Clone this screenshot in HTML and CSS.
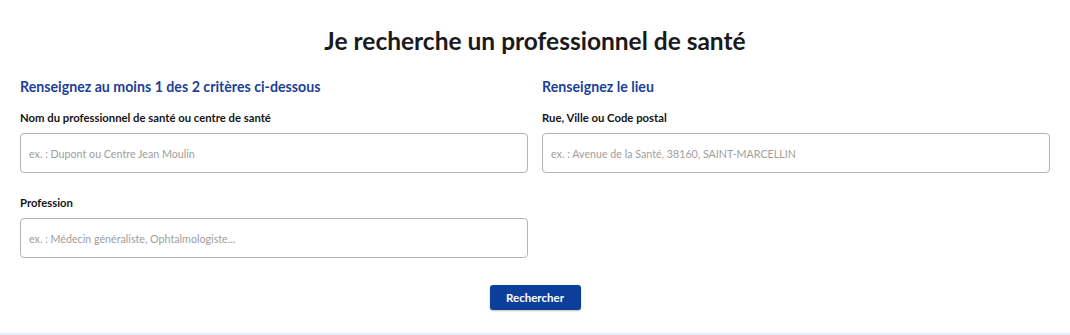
FILE: index.html
```html
<!DOCTYPE html>
<html lang="fr">
<head>
<meta charset="utf-8">
<link rel="stylesheet" href="styles.css">
</head>
<body>
<main class="search">
  <h1 class="title">Je recherche un professionnel de santé</h1>
  <div class="cols">
    <section class="col">
      <h2 class="col-title">Renseignez au moins 1 des 2 critères ci-dessous</h2>
      <div class="field">
        <label class="label">Nom du professionnel de santé ou centre de santé</label>
        <input class="input" type="text" placeholder="ex. : Dupont ou Centre Jean Moulin">
      </div>
      <div class="field">
        <label class="label">Profession</label>
        <input class="input" type="text" placeholder="ex. : Médecin généraliste, Ophtalmologiste...">
      </div>
    </section>
    <section class="col">
      <h2 class="col-title">Renseignez le lieu</h2>
      <div class="field">
        <label class="label">Rue, Ville ou Code postal</label>
        <input class="input" type="text" placeholder="ex. : Avenue de la Santé, 38160, SAINT-MARCELLIN">
      </div>
    </section>
  </div>
  <div class="actions">
    <button class="btn" type="button">Rechercher</button>
  </div>
</main>
</body>
</html>
```
FILE: styles.css
```css
* { box-sizing: border-box; }
html, body { margin: 0; padding: 0; background: #fff; }
body {
  font-family: Lato, "Noto Sans", sans-serif;
  color: #161616;
  height: 335px;
}
.search {
  border-bottom: 2px solid #e8ecf8;
  padding: 24px 20px 0;
  height: 335px;
}
.title {
  margin: 0 0 19px;
  text-align: center;
  font-size: 24.5px;
  font-weight: 700;
  line-height: 34px;
  color: #1a1a1a;
}
.cols {
  display: grid;
  grid-template-columns: 1fr 1fr;
  column-gap: 14px;
}
.col {
  display: flex;
  flex-direction: column;
  gap: 22px;
}
.col-title {
  margin: 0 0 -9px;
  font-size: 14.2px;
  font-weight: 700;
  line-height: 20px;
  color: #1d3f98;
}
.field {
  display: flex;
  flex-direction: column;
}
.label {
  font-size: 11.3px;
  font-weight: 700;
  line-height: 16px;
  margin-bottom: 7px;
  color: #161616;
}
.input {
  height: 40px;
  border: 1.5px solid #b4b4b4;
  border-radius: 4px;
  padding: 0 8px;
  font-family: inherit;
  font-size: 10.7px;
  color: #333;
  background: #fff;
}
.input::placeholder { color: #9e9e9e; }
.actions {
  display: flex;
  justify-content: center;
  margin-top: 27px;
}
.btn {
  width: 91px;
  height: 25px;
  border: 0;
  border-radius: 3px;
  background: #0b3f9a;
  color: #fff;
  font-family: inherit;
  font-size: 11.5px;
  font-weight: 700;
  box-shadow: 0 1px 2px rgba(0,0,0,0.25);
}
```
